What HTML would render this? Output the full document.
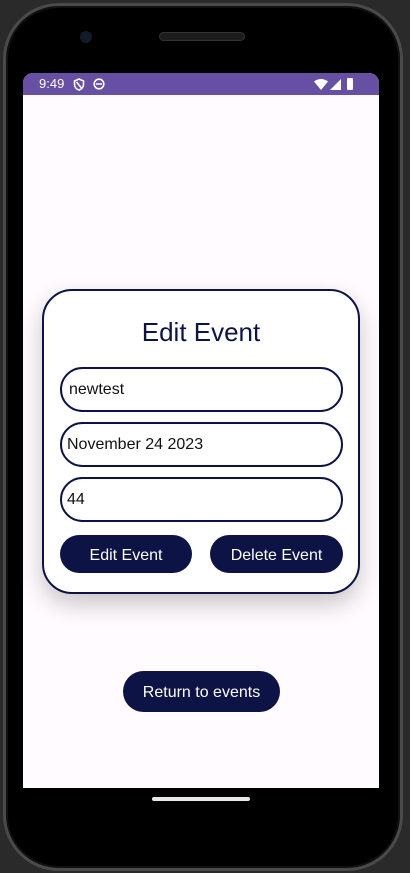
<!DOCTYPE html>
<html><head><style>
*{margin:0;padding:0;box-sizing:border-box}
body{width:410px;height:873px;background:#2a2a2a;position:relative;overflow:hidden;font-family:"Liberation Sans",sans-serif}
.phone{position:absolute;left:3px;top:3px;width:400px;height:868px;background:#000;border-radius:56px;border:3px solid #4a4a4a;box-shadow:inset 0 0 0 2px #111}
.cam{position:absolute;left:80px;top:31px;width:12px;height:12px;border-radius:50%;background:#151a28}
.spk{position:absolute;left:159px;top:32px;width:86px;height:9px;border-radius:5px;background:#1c1c1c;border:1px solid #333}
.screen{position:absolute;left:23px;top:73px;width:356px;height:715px;background:#fffbfe;border-radius:10px 10px 0 0;overflow:hidden}
.sb{height:22px;background:#6750a4;color:#fff;font-size:13px;position:relative}
.card{position:absolute;left:19px;top:216px;width:318px;height:305px;border:2px solid #0d1445;border-radius:30px;background:#fff;box-shadow:0 10px 24px rgba(0,0,0,.22)}
.t{position:absolute;top:26px;width:100%;text-align:center;font-size:26px;color:#0d1445}
.in{position:absolute;left:16px;width:283px;height:45px;border:2px solid #0d1445;border-radius:23px;font-size:16px;color:#111;padding-left:5px;line-height:41px}
.b{position:absolute;height:38px;background:#0d1445;color:#fff;border-radius:19px;font-size:16px;text-align:center;line-height:41px}
.home{position:absolute;left:152px;top:797px;width:98px;height:4px;border-radius:2px;background:#e8e8e8}
</style></head><body>
<div class="phone"></div>
<div class="cam"></div><div class="spk"></div>
<div class="screen">
 <div class="sb">
  <span style="position:absolute;left:16px;top:3px">9:49</span>
  <svg style="position:absolute;left:50px;top:5px" width="12" height="13" viewBox="0 0 12 13"><path d="M6 1L10.5 3v3.5c0 2.8-2 4.8-4.5 5.5C3.5 11.3 1.5 9.3 1.5 6.5V3z M3.5 4l5 6" fill="none" stroke="#fff" stroke-width="1.6"/></svg>
  <svg style="position:absolute;left:70px;top:5px" width="12" height="12" viewBox="0 0 12 12"><circle cx="6" cy="6" r="4.8" fill="none" stroke="#fff" stroke-width="1.6"/><path d="M3 6h6" stroke="#fff" stroke-width="1.6"/></svg>
  <svg style="position:absolute;left:291px;top:6px" width="14" height="11" viewBox="0 0 14 11"><path d="M0 2.5Q7-2.5 14 2.5L7 11z" fill="#fff"/></svg>
  <svg style="position:absolute;left:307px;top:6px" width="11" height="11" viewBox="0 0 11 11"><path d="M11 0V11H0z" fill="#fff"/></svg>
  <div style="position:absolute;left:324px;top:5px;width:6px;height:12px;background:#fff;border-radius:1px"></div>
 </div>
 <div class="card">
  <div class="t">Edit Event</div>
  <div class="in" style="top:76px;padding-left:7px">newtest</div>
  <div class="in" style="top:131px">November 24 2023</div>
  <div class="in" style="top:186px">44</div>
  <div class="b" style="left:16px;top:244px;width:132px">Edit Event</div>
  <div class="b" style="left:166px;top:244px;width:133px">Delete Event</div>
 </div>
 <div class="b" style="left:100px;top:598px;width:157px;height:41px;line-height:43px;border-radius:21px">Return to events</div>
</div>
<div class="home"></div>
</body></html>
